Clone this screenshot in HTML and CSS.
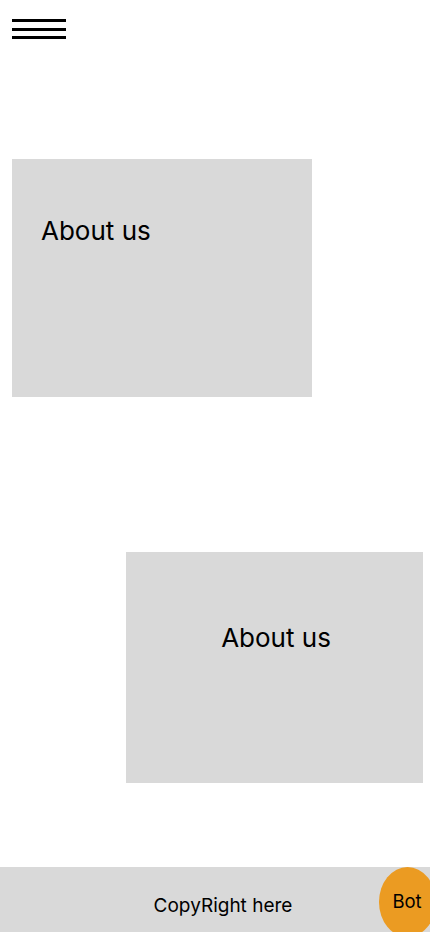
FILE: index.html
```html
<!DOCTYPE html>
<html lang="en">
<head>
<meta charset="utf-8">
<meta name="viewport" content="width=device-width, initial-scale=1">
<title>About</title>
<link rel="stylesheet" href="styles.css">
</head>
<body>
<div class="page">
  <header class="header">
    <button class="menu" aria-label="Menu">
      <span class="bar"></span>
      <span class="bar"></span>
      <span class="bar"></span>
    </button>
  </header>
  <main class="main">
    <section class="card card-left">
      <h2 class="card-title">About us</h2>
    </section>
    <section class="card card-right">
      <h2 class="card-title">About us</h2>
    </section>
  </main>
  <footer class="footer">
    <span class="copy">CopyRight here</span>
    <button class="bot">Bot</button>
  </footer>
</div>
</body>
</html>
```
FILE: styles.css
```css
* { box-sizing: border-box; }
html, body { margin: 0; padding: 0; background: #ffffff; }
body {
  font-family: Inter, "Noto Sans", sans-serif;
  color: #000;
  overflow: hidden;
}
.page {
  width: 430px;
  height: 932px;
  display: flex;
  flex-direction: column;
}
.header {
  padding: 19px 12px 0 12px;
  height: 40px;
}
.menu {
  display: flex;
  flex-direction: column;
  gap: 5.5px;
  width: 54px;
  padding: 0;
  border: 0;
  background: none;
}
.bar {
  display: block;
  width: 54px;
  height: 3px;
  background: #000;
}
.main {
  flex: 1;
  display: flex;
  flex-direction: column;
}
.card {
  background: #d9d9d9;
}
.card-title {
  margin: 0;
  font-size: 26px;
  font-weight: 400;
  line-height: 31px;
}
.card-left {
  margin: 119px 0 0 12px;
  width: 300px;
  height: 238px;
  padding: 56px 29px;
}
.card-right {
  margin: 155px 0 0 126px;
  width: 297px;
  height: 231px;
  padding-top: 70px;
  padding-left: 3px;
  text-align: center;
}
.footer {
  position: relative;
  height: 65px;
  background: #d9d9d9;
  display: flex;
  align-items: center;
  justify-content: center;
  padding-left: 16px;
  padding-top: 11px;
}
.copy {
  font-size: 19px;
  line-height: 23px;
}
.bot {
  position: absolute;
  top: 0;
  right: -6px;
  width: 57px;
  height: 70px;
  border-radius: 50%;
  border: 0;
  background: #eb9b22;
  font-family: Inter, "Noto Sans", sans-serif;
  font-size: 18.5px;
  color: #000;
  padding: 0 1px 2px 0;
}
```
